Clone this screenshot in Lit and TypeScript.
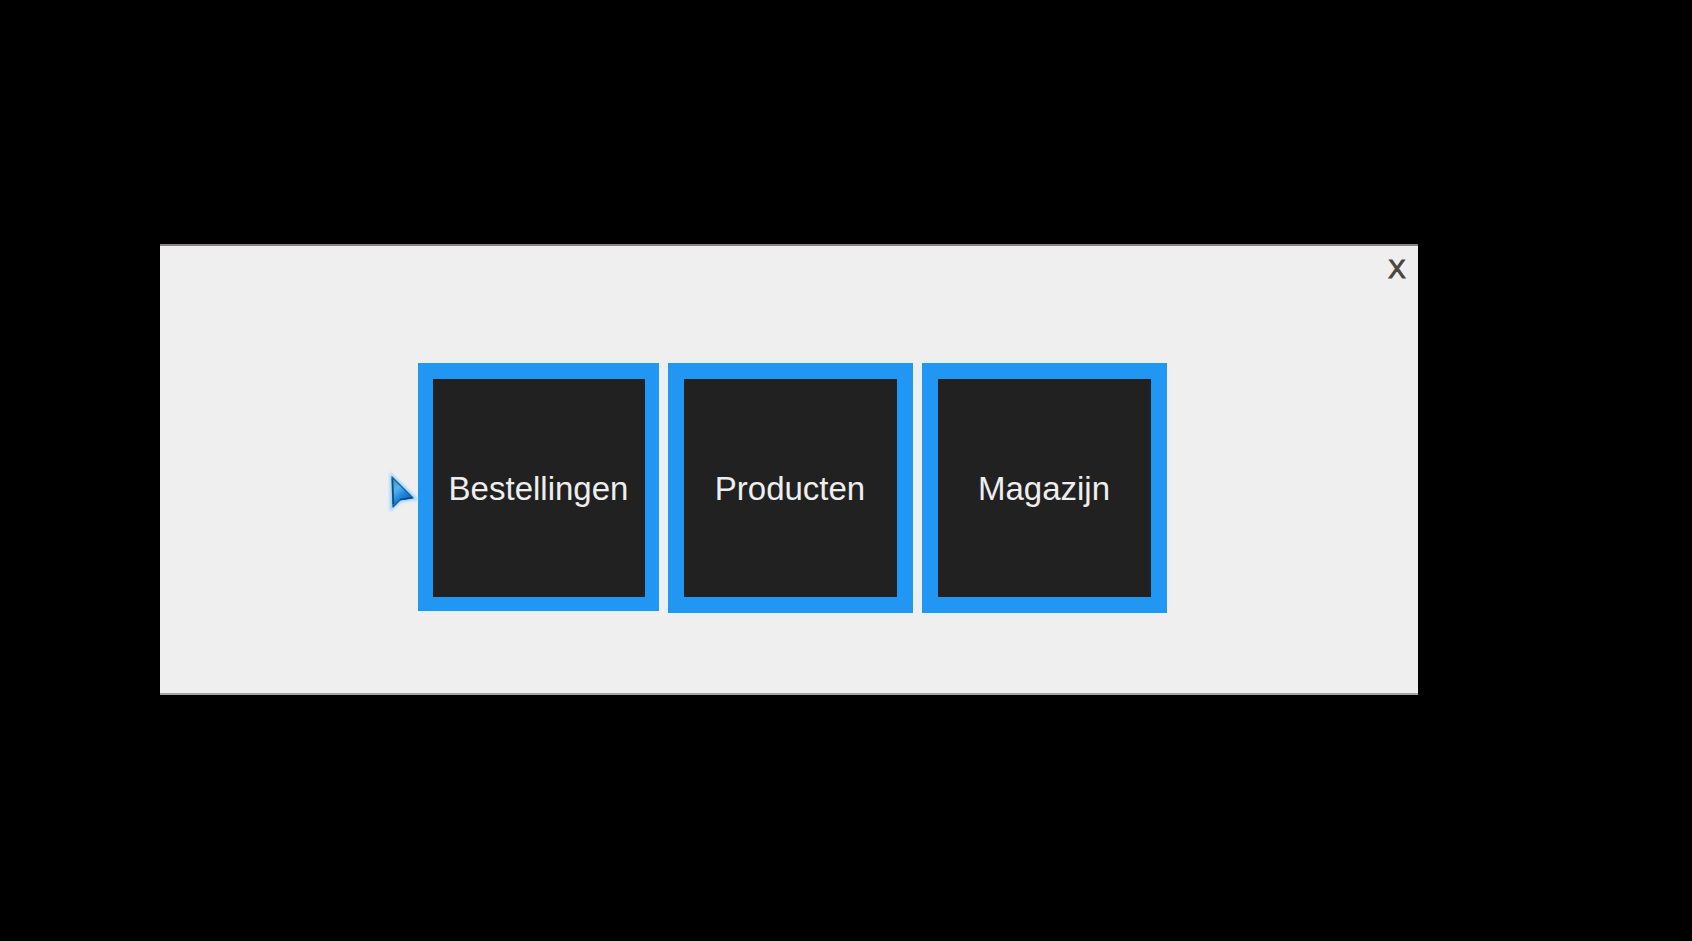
import { LitElement, html, css } from "lit";
import { customElement } from "lit/decorators.js";

@customElement("app-root")
export class AppRoot extends LitElement {
  static styles = css`
    :host {
      display: block;
      box-sizing: border-box;
      min-height: 100vh;
      padding: 244px 274px 244px 160px;
      background: #000;
      font-family: "Liberation Sans", Arial, sans-serif;
    }
    .panel {
      position: relative;
      display: flex;
      flex-direction: column;
      box-sizing: border-box;
      padding-bottom: 80px;
      background: #efefef;
      border-top: 2px solid #8a8283;
      border-bottom: 2px solid #a2a5a4;
    }
    .bar {
      display: flex;
      justify-content: flex-end;
      padding: 7px 7px 0 0;
    }
    .close {
      width: 28px;
      height: 32px;
      padding: 0;
      border: 0;
      background: none;
      color: #4a453e;
      font: 26px/32px "Liberation Sans", Arial, sans-serif;
      -webkit-text-stroke: 1px #4a453e;
      cursor: pointer;
    }
    .tiles {
      display: flex;
      flex-wrap: wrap;
      justify-content: center;
      gap: 9px;
      padding: 78px 0 0 6px;
    }
    .tile {
      box-sizing: border-box;
      width: 245px;
      height: 250px;
      padding: 2px 0 0;
      border: 16px solid #2196f3;
      background: #212121;
      color: #eee;
      font: 33px/40px "Liberation Sans", Arial, sans-serif;
      box-shadow: 0 0 3px #d2f4ff;
      cursor: pointer;
    }
    .tile.active {
      width: 241px;
      height: 248px;
      border-width: 16px 14px 14px 15px;
    }
    .pointer {
      position: absolute;
      left: 226px;
      top: 223px;
      width: 34px;
      height: 44px;
      pointer-events: none;
    }
  `;

  private items = ["Bestellingen", "Producten", "Magazijn"];

  render() {
    return html`
      <main class="panel">
        <div class="bar">
          <button class="close" type="button" aria-label="X">X</button>
        </div>
        <nav class="tiles">
          ${this.items.map(
            (item, i) =>
              html`<button class="tile ${i === 0 ? "active" : ""}" type="button">${item}</button>`
          )}
        </nav>
        <svg class="pointer" viewBox="0 0 34 44" aria-hidden="true">
          <defs>
            <linearGradient id="fill" x1="0" y1="0" x2="0.6" y2="1">
              <stop offset="0" stop-color="#3f8fc0" />
              <stop offset="0.4" stop-color="#52b4ec" />
              <stop offset="0.65" stop-color="#2088dc" />
              <stop offset="1" stop-color="#0f5fb4" />
            </linearGradient>
            <filter id="glow" x="-40%" y="-40%" width="180%" height="180%">
              <feGaussianBlur stdDeviation="1.8" />
            </filter>
          </defs>
          <path d="M6 8V38L14 31L28 29Z" fill="#79c8ff" stroke="#8fd2ff" stroke-width="4" filter="url(#glow)" />
          <path d="M6 8L7 38L14 31L27 29Z" fill="url(#fill)" stroke="#1a5c98" stroke-width="1.200" stroke-linejoin="round" />
          <path d="M6.500 10L7.500 35" stroke="#1c4a70" stroke-width="1.500" />
          <path d="M14 30.500L26 28.700" stroke="#0d4888" stroke-width="1.500" />
        </svg>
      </main>
    `;
  }
}
